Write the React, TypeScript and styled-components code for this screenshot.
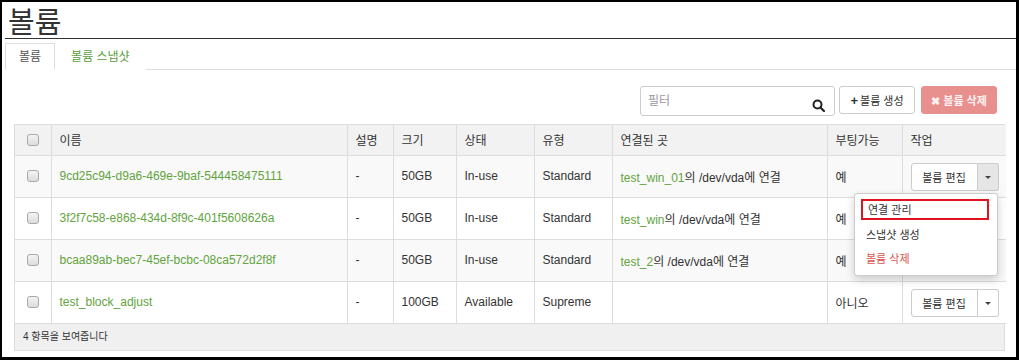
import styled, { createGlobalStyle } from "styled-components"

const Global = createGlobalStyle`
  html, body { margin: 0; padding: 0; background: #fff; }
  body { font-family: "Liberation Sans", Arial, "Noto Sans CJK KR", sans-serif; color: #333; }
  * { box-sizing: border-box; }
`

const Frame = styled.div`
  width: 1019px;
  height: 360px;
  border-style: solid;
  border-color: #000;
  border-width: 2px 3px 3px 2px;
  padding: 0 0 0 3px;
  overflow: hidden;
  background: #fff;
`

const Title = styled.h1`
  margin: 0;
  height: 37px;
  padding-left: 3px;
  font-size: 29px;
  line-height: 36px;
  font-weight: normal;
  color: #333;
  border-bottom: 1px solid #333;
  font-family: "Noto Sans CJK KR", sans-serif;
`

const Tabs = styled.div`
  display: flex;
  margin-top: 4px;
  height: 27px;
  border-bottom: 1px solid #ddd;
`

const Tab = styled.div<{ $active?: boolean }>`
  padding: 0 ${p => (p.$active ? "13px" : "15px")};
  height: 27px;
  line-height: 26px;
  font-size: 12px;
  white-space: nowrap;
  color: ${p => (p.$active ? "#555" : "#5c9f3e")};
  background: #fff;
  border: 1px solid ${p => (p.$active ? "#ddd" : "transparent")};
  border-bottom-color: ${p => (p.$active ? "#fff" : "transparent")};
`

const Toolbar = styled.div`
  display: flex;
  justify-content: flex-end;
  align-items: flex-start;
  margin: 16px 19px 0 0;
  height: 30px;
`

const Filter = styled.div`
  position: relative;
  width: 195px;
  height: 30px;
  border: 1px solid #ccc;
  border-radius: 3px;
  padding-left: 7px;
  font-size: 12px;
  line-height: 28px;
  color: #999;
  margin-right: 4px;
  svg { position: absolute; right: 9px; bottom: 3px; }
`

const Button = styled.div<{ $danger?: boolean }>`
  height: 28px;
  width: 76px;
  border: 1px solid ${p => (p.$danger ? "#e5908e" : "#ccc")};
  background: ${p => (p.$danger ? "#e8908e" : "#fff")};
  color: ${p => (p.$danger ? "#fdf2f2" : "#333")};
  border-radius: 3px;
  font-size: 11px;
  display: flex;
  align-items: center;
  justify-content: center;
  gap: 2px;
  margin-left: ${p => (p.$danger ? "6px" : "0")};
  font-weight: ${p => (p.$danger ? "bold" : "normal")};
`

const TableWrap = styled.div`
  margin: 8px 11px 0 9px;
  border: 1px solid #ddd;
  position: relative;
`

const Table = styled.table`
  width: 100%;
  border-collapse: collapse;
  font-size: 12px;
  table-layout: fixed;
`

const Th = styled.th<{ $w: number }>`
  width: ${p => p.$w}px;
  height: 30px;
  background: #f2f2f2;
  border-right: 1px solid #ddd;
  border-bottom: 1px solid #ddd;
  text-align: left;
  font-weight: normal;
  padding: 0 8px;
  color: #333;
  &:last-child { border-right: none; }
`

const Tr = styled.tr<{ $odd?: boolean }>`
  background: ${p => (p.$odd ? "#f9f9f9" : "#fff")};
`

const Td = styled.td`
  height: 42px;
  border-right: 1px solid #ddd;
  border-bottom: 1px solid #ddd;
  padding: 0 8px;
  color: #333;
  white-space: nowrap;
  overflow: visible;
  &:last-child { border-right: none; }
`

const CheckCell = styled.div`
  display: flex;
  justify-content: center;
`

const Check = styled.span`
  display: inline-block;
  width: 12px;
  height: 12px;
  border: 1px solid #a9a9a9;
  border-radius: 3px;
  background: linear-gradient(#f4f4f4, #dcdcdc);
`

const Link = styled.span`
  color: #62a43e;
`

const Split = styled.div`
  display: flex;
  height: 28px;
  width: 88px;
  margin-top: 2px;
`

const SplitMain = styled.div`
  flex: 1;
  border: 1px solid #ccc;
  border-radius: 3px 0 0 3px;
  background: #fff;
  font-size: 11px;
  display: flex;
  align-items: center;
  justify-content: center;
`

const SplitCaret = styled.div<{ $open?: boolean }>`
  width: 21px;
  border: 1px solid #ccc;
  border-left: none;
  border-radius: 0 3px 3px 0;
  background: ${p => (p.$open ? "#e6e6e6" : "#fff")};
  display: flex;
  align-items: center;
  justify-content: center;
  &::after {
    content: "";
    border-left: 3px solid transparent;
    border-right: 3px solid transparent;
    border-top: 3px solid #444;
  }
`

const Menu = styled.div`
  position: absolute;
  left: 839px;
  top: 68px;
  width: 144px;
  height: 83px;
  background: #fff;
  border: 1px solid #ccc;
  border-radius: 3px;
  box-shadow: 0 4px 10px rgba(0, 0, 0, 0.18);
  padding: 5px 0;
  font-size: 11px;
`

const MenuItem = styled.div<{ $danger?: boolean; $marked?: boolean }>`
  margin: 0 8px 0 6px;
  height: ${p => (p.$marked ? "21px" : "24px")};
  line-height: ${p => (p.$marked ? "19px" : "24px")};
  padding-left: 5px;
  color: ${p => (p.$danger ? "#d9534f" : "#333")};
  border: ${p => (p.$marked ? "2px solid #e0141e" : "none")};
  margin-bottom: ${p => (p.$marked ? "3px" : "0")};
`

const Footer = styled.div`
  height: 26px;
  background: #f0f0f0;
  font-size: 10px;
  line-height: 26px;
  padding-left: 8px;
  color: #333;
`

const SearchIcon = () => (
  <svg width="13" height="13" viewBox="0 0 13 13">
    <circle cx="5.5" cy="5.5" r="4" fill="none" stroke="#222" strokeWidth="2" />
    <line x1="8.5" y1="8.5" x2="12" y2="12" stroke="#222" strokeWidth="2.2" strokeLinecap="round" />
  </svg>
)

const cols: [string, number][] = [
  ["", 36], ["이름", 296], ["설명", 46], ["크기", 63], ["상태", 78],
  ["유형", 78], ["연결된 곳", 215], ["부팅가능", 75], ["작업", 104],
]

const rows = [
  { name: "9cd25c94-d9a6-469e-9baf-544458475111", size: "50GB", status: "In-use", type: "Standard", host: "test_win_01", boot: "예", open: true },
  { name: "3f2f7c58-e868-434d-8f9c-401f5608626a", size: "50GB", status: "In-use", type: "Standard", host: "test_win", boot: "예" },
  { name: "bcaa89ab-bec7-45ef-bcbc-08ca572d2f8f", size: "50GB", status: "In-use", type: "Standard", host: "test_2", boot: "예" },
  { name: "test_block_adjust", size: "100GB", status: "Available", type: "Supreme", host: "", boot: "아니오" },
]

export default function App() {
  return (
    <Frame>
      <Global />
      <Title>볼륨</Title>
      <Tabs>
        <Tab $active>볼륨</Tab>
        <Tab>볼륨 스냅샷</Tab>
      </Tabs>
      <Toolbar>
        <Filter>필터<SearchIcon /></Filter>
        <Button><b style={{ fontSize: 13 }}>+</b>볼륨 생성</Button>
        <Button $danger>✖ 볼륨 삭제</Button>
      </Toolbar>
      <TableWrap>
        <Table>
          <thead>
            <tr>
              {cols.map(([label, w], i) => (
                <Th key={i} $w={w}>{i === 0 ? <CheckCell><Check /></CheckCell> : label}</Th>
              ))}
            </tr>
          </thead>
          <tbody>
            {rows.map((r, i) => (
              <Tr key={r.name} $odd={i % 2 === 0}>
                <Td><CheckCell><Check /></CheckCell></Td>
                <Td><Link>{r.name}</Link></Td>
                <Td>-</Td>
                <Td>{r.size}</Td>
                <Td>{r.status}</Td>
                <Td>{r.type}</Td>
                <Td>{r.host && <><Link>{r.host}</Link>의 /dev/vda에 연결</>}</Td>
                <Td>{r.boot}</Td>
                <Td>
                  {(i === 0 || i === 3) && (
                    <Split>
                      <SplitMain>볼륨 편집</SplitMain>
                      <SplitCaret $open={r.open} />
                    </Split>
                  )}
                </Td>
              </Tr>
            ))}
          </tbody>
        </Table>
        <Footer>4 항목을 보여줍니다</Footer>
        <Menu>
          <MenuItem $marked>연결 관리</MenuItem>
          <MenuItem>스냅샷 생성</MenuItem>
          <MenuItem $danger>볼륨 삭제</MenuItem>
        </Menu>
      </TableWrap>
    </Frame>
  )
}
